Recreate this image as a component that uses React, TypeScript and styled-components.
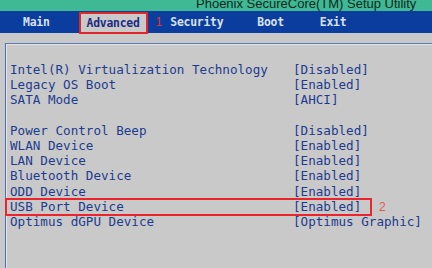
import styled, { createGlobalStyle } from 'styled-components';

const GlobalStyle = createGlobalStyle`
	html, body {
		margin: 0;
		padding: 0;
		width: 432px;
		height: 268px;
		overflow: hidden;
		background: #c9c9c9;
	}
`;

type Setting = { label: string; value: string; marked?: boolean } | null;

const settings: Setting[] = [
	{ label: 'Intel(R) Virtualization Technology', value: '[Disabled]' },
	{ label: 'Legacy OS Boot', value: '[Enabled]' },
	{ label: 'SATA Mode', value: '[AHCI]' },
	null,
	{ label: 'Power Control Beep', value: '[Disabled]' },
	{ label: 'WLAN Device', value: '[Enabled]' },
	{ label: 'LAN Device', value: '[Enabled]' },
	{ label: 'Bluetooth Device', value: '[Enabled]' },
	{ label: 'ODD Device', value: '[Enabled]' },
	{ label: 'USB Port Device', value: '[Enabled]', marked: true },
	{ label: 'Optimus dGPU Device', value: '[Optimus Graphic]' },
];

const tabs = [
	{ name: 'Main', x: 23 },
	{ name: 'Advanced', x: 29, active: true },
	{ name: 'Security', x: 8 },
	{ name: 'Boot', x: 34 },
	{ name: 'Exit', x: 36 },
];

const App = () => {
	return (
		<Screen>
			<GlobalStyle />
			<TitleBar>
				<span>Phoenix SecureCore(TM) Setup Utility</span>
			</TitleBar>
			<NavBar>
				{tabs.map((tab) => (
					<TabWrap key={tab.name} $x={tab.x}>
						<Tab $active={!!tab.active}>{tab.name}</Tab>
						{tab.active && <Marker $size={12}>1</Marker>}
					</TabWrap>
				))}
			</NavBar>
			<Panel>
				{settings.map((s, i) =>
					s ? (
						<Row key={s.label} $marked={!!s.marked}>
							<span>{s.label}</span>
							<span>{s.value}</span>
							{s.marked && <RowMarker>2</RowMarker>}
						</Row>
					) : (
						<Row key={'gap' + i} $marked={false} />
					)
				)}
			</Panel>
		</Screen>
	);
};

export default App;

const Screen = styled.div`
	width: 432px;
	height: 268px;
	background: #c9c9c9;
	overflow: hidden;
`;

const TitleBar = styled.div`
	height: 11px;
	background: #3fb894;
	display: flex;
	align-items: flex-end;
	overflow: hidden;
	padding-left: 196px;
	& span {
		font-family: 'Liberation Sans', Arial, sans-serif;
		font-size: 13px;
		line-height: 14px;
		color: #10281e;
		white-space: nowrap;
	}
`;

const NavBar = styled.div`
	height: 22px;
	background: #0b3d9e;
	display: flex;
	align-items: stretch;
`;

const TabWrap = styled.div<{ $x: number }>`
	display: flex;
	align-items: center;
	margin-left: ${(p) => p.$x}px;
`;

const Tab = styled.div<{ $active: boolean }>`
	font-family: 'DejaVu Sans Mono', 'Liberation Mono', monospace;
	font-weight: bold;
	font-size: 11.4px;
	letter-spacing: -0.02em;
	display: flex;
	align-items: center;
	height: 100%;
	box-sizing: border-box;
	color: ${(p) => (p.$active ? '#1b2b82' : '#d9e2f4')};
	background: ${(p) => (p.$active ? '#c9c9c9' : 'transparent')};
	border: ${(p) => (p.$active ? '2px solid #e0262a' : 'none')};
	padding: ${(p) => (p.$active ? '0 6px' : '0')};
	margin-top: ${(p) => (p.$active ? '1px' : '0')};
	height: ${(p) => (p.$active ? '22px' : '100%')};
`;

const Marker = styled.span<{ $size: number }>`
	font-family: 'Liberation Sans', Arial, sans-serif;
	font-size: ${(p) => p.$size}px;
	color: #e0343a;
	margin-left: 8px;
`;

const Panel = styled.div`
	margin: 10px 0 0 5px;
	border-top: 1px solid #5878bb;
	border-left: 1px solid #4a6fbc;
	box-shadow: inset 1px 1px 0 #e4e4e4;
	padding: 18px 0 0 4px;
	height: 240px;
	box-sizing: border-box;
`;

const Row = styled.div<{ $marked: boolean }>`
	position: relative;
	display: grid;
	grid-template-columns: 283px 1fr;
	height: 15.2px;
	line-height: 15.2px;
	font-family: 'DejaVu Sans Mono', 'Liberation Mono', monospace;
	font-size: 12.6px;
	color: #1d3b8f;
	white-space: nowrap;
	&::after {
		content: '';
		display: ${(p) => (p.$marked ? 'block' : 'none')};
		position: absolute;
		left: -5px;
		top: -1px;
		width: 367px;
		height: 18px;
		border: 2px solid #e8262c;
		box-sizing: border-box;
	}
`;

const RowMarker = styled.span`
	position: absolute;
	left: 369px;
	top: 1px;
	font-family: 'Liberation Sans', Arial, sans-serif;
	font-size: 12px;
	color: #e05a4a;
`;
